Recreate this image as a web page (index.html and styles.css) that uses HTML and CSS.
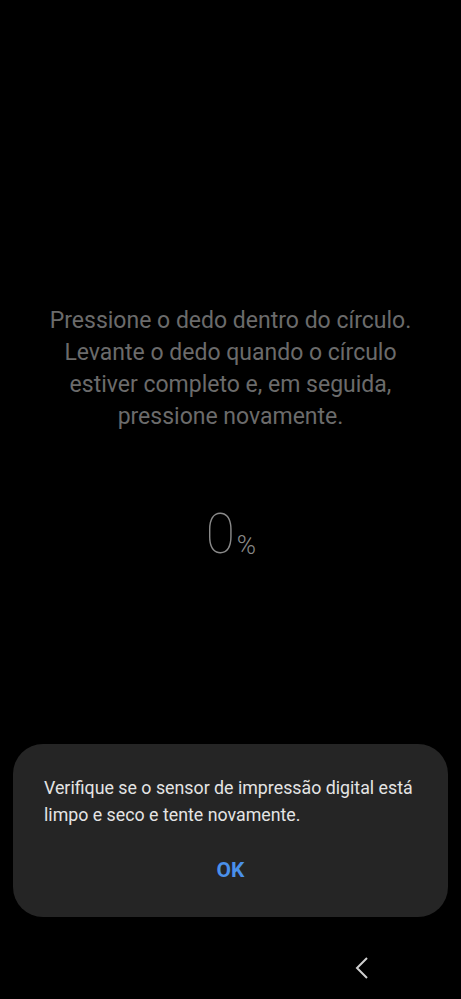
FILE: index.html
```html
<!DOCTYPE html>
<html>
<head>
<meta charset="utf-8">
<link rel="stylesheet" href="styles.css">
</head>
<body>
<div class="screen">
  <div class="top"></div>
  <p class="guide">Pressione o dedo dentro do círculo. Levante o dedo quando o círculo estiver completo e, em seguida, pressione novamente.</p>
  <div class="percent"><span class="num">0</span><span class="pct">%</span></div>
  <div class="spacer"></div>
  <div class="dialog">
    <p class="msg">Verifique se o sensor de impressão digital está limpo e seco e tente novamente.</p>
    <div class="ok">OK</div>
  </div>
  <div class="navbar">
    <svg class="back" width="14" height="22" viewBox="0 0 14 22"><path d="M12 1 L2 11 L12 21" fill="none" stroke="#d0d0d0" stroke-width="2"/></svg>
  </div>
</div>
</body>
</html>
```
FILE: styles.css
```css
html, body {
  margin: 0;
  padding: 0;
  background: #000;
}
.screen {
  width: 461px;
  height: 999px;
  display: flex;
  flex-direction: column;
  align-items: center;
  font-family: Roboto, "Noto Sans", sans-serif;
  overflow: hidden;
}
.top {
  height: 305px;
  flex: none;
}
.guide {
  margin: 0;
  width: 372px;
  text-align: center;
  color: #6b6b6b;
  font-size: 23px;
  line-height: 32px;
  font-weight: 400;
}
.percent {
  margin-top: 75px;
  display: flex;
  align-items: flex-end;
  height: 52px;
  padding-left: 0;
}
.num {
  font-size: 56px;
  font-weight: 100;
  color: #8a8a8a;
  line-height: 52px;
  display: inline-block;
  transform: scaleX(0.95);
}
.pct {
  font-size: 26px;
  font-weight: 300;
  color: #8a8a8a;
  line-height: 26px;
  margin-left: 1px;
  margin-bottom: 2px;
}
.spacer {
  flex: none;
  height: 184px;
}
.dialog {
  width: 435px;
  height: 173px;
  box-sizing: border-box;
  background: #252525;
  border-radius: 30px;
  padding: 30px 14px 0 31px;
  display: flex;
  flex-direction: column;
  flex: none;
}
.msg {
  margin: 0;
  color: #e4e4e4;
  font-size: 17.8px;
  line-height: 27px;
}
.ok {
  margin-top: 30px;
  margin-left: -17px;
  text-align: center;
  color: #4a90ea;
  font-size: 21px;
  font-weight: 700;
  line-height: 24px;
}
.navbar {
  width: 100%;
  height: 100px;
  display: flex;
  justify-content: flex-end;
  align-items: flex-start;
  box-sizing: border-box;
  padding-right: 92px;
  padding-top: 40px;
}
.back {
  display: block;
}
```
